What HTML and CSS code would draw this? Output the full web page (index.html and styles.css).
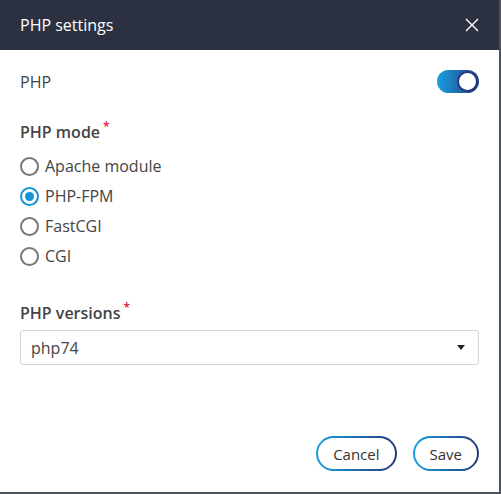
FILE: index.html
```html
<!DOCTYPE html>
<html lang="en">
<head>
  <meta charset="UTF-8">
  <title>PHP settings</title>
  <link rel="stylesheet" href="styles.css">
</head>
<body>
  <div class="dialog">
    <div class="dialog-header">
      <h2>PHP settings</h2>
      <button class="close" type="button" aria-label="Close">
        <svg width="14" height="14" viewBox="0 0 14 14">
          <path d="M1 1L13 13M13 1L1 13" stroke="#fff" stroke-width="1.4" fill="none"/>
        </svg>
      </button>
    </div>
    <div class="dialog-body">
      <div class="row">
        <span>PHP</span>
        <label class="toggle">
          <input type="checkbox" checked>
          <span class="track"><span class="knob"></span></span>
        </label>
      </div>

      <div class="label">PHP mode<span class="req">*</span></div>
      <div class="radios">
        <label class="radio"><input type="radio" name="mode"><span class="dot"></span>Apache module</label>
        <label class="radio"><input type="radio" name="mode" checked><span class="dot"></span>PHP-FPM</label>
        <label class="radio"><input type="radio" name="mode"><span class="dot"></span>FastCGI</label>
        <label class="radio"><input type="radio" name="mode"><span class="dot"></span>CGI</label>
      </div>

      <div class="label versions">PHP versions<span class="req">*</span></div>
      <div class="select">
        <span>php74</span>
        <span class="caret"></span>
      </div>
    </div>
    <div class="dialog-footer">
      <button class="btn" type="button">Cancel</button>
      <button class="btn" type="button">Save</button>
    </div>
  </div>
</body>
</html>
```

FILE: styles.css
```css
body {
  margin: 0;
  background: #4d515b;
  font-family: 'Open Sans', sans-serif;
  color: #444;
}
.dialog {
  width: 499px;
  height: 492px;
  background: white;
  display: flex;
  flex-direction: column;
}
.dialog-header {
  background: #2b3140;
  height: 50px;
  display: flex;
  align-items: center;
  justify-content: space-between;
  padding: 0 20px;
}
.dialog-header h2 {
  margin: 0;
  color: white;
  font-size: 16px;
  font-weight: 400;
}
.close {
  background: none;
  border: none;
  padding: 0;
  width: 14px;
  height: 14px;
  cursor: pointer;
}
.close svg {
  display: block;
}
.dialog-body {
  flex: 1;
  padding: 0 20px;
}
.row {
  display: flex;
  justify-content: space-between;
  align-items: center;
  height: 23px;
  margin-top: 20px;
  font-size: 16px;
}
.toggle input,
.radio input {
  display: none;
}
.track {
  display: block;
  width: 42px;
  height: 23px;
  border-radius: 12px;
  background: linear-gradient(90deg, #1a9fe0, #243a7c);
  position: relative;
}
.knob {
  position: absolute;
  right: 1px;
  top: 1px;
  width: 17px;
  height: 17px;
  border-radius: 50%;
  background: white;
  border: 2px solid #243a7c;
}
.label {
  margin-top: 28px;
  font-size: 16px;
  font-weight: 600;
  color: #444;
  line-height: 22px;
}
.req {
  color: #e0103a;
  font-size: 12px;
  vertical-align: top;
  margin-left: 3px;
  line-height: 12px;
}
.radios {
  margin-top: 8px;
}
.radio {
  display: flex;
  align-items: center;
  height: 30px;
  font-size: 16px;
}
.dot {
  box-sizing: border-box;
  width: 19px;
  height: 19px;
  border: 2px solid #777;
  border-radius: 50%;
  margin-right: 6px;
  position: relative;
}
.radio input:checked + .dot {
  border-color: #1494d8;
}
.radio input:checked + .dot::after {
  content: "";
  position: absolute;
  left: 3px;
  top: 3px;
  width: 9px;
  height: 9px;
  border-radius: 50%;
  background: #1494d8;
}
.versions {
  margin-top: 31px;
}
.select {
  margin-top: 6px;
  height: 35px;
  box-sizing: border-box;
  border: 1px solid #d4d4d4;
  border-radius: 3px;
  display: flex;
  align-items: center;
  justify-content: space-between;
  padding: 0 13px 0 10px;
  font-size: 16px;
}
.caret {
  width: 0;
  height: 0;
  border-left: 4px solid transparent;
  border-right: 4px solid transparent;
  border-top: 5px solid #222;
}
.dialog-footer {
  display: flex;
  justify-content: flex-end;
  gap: 16px;
  padding: 0 20px 21px;
}
.btn {
  height: 35px;
  padding: 0 15px;
  font-family: 'Open Sans', sans-serif;
  font-size: 15px;
  color: #333;
  border: 2px solid transparent;
  border-radius: 18px;
  background: linear-gradient(white, white) padding-box,
    linear-gradient(90deg, #1a9fe0, #243a7c) border-box;
  cursor: pointer;
}
```
